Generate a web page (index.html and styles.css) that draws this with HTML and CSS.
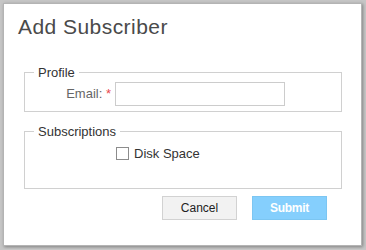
FILE: index.html
```html
<!DOCTYPE html>
<html lang="en">
	<head>
		<meta charset="UTF-8" />
		<meta name="viewport" content="width=device-width, initial-scale=1.0" />
		<title>Add Subscriber</title>
		<link rel="stylesheet" href="styles.css">
	</head>

	<body>
		<div class="dialog">
			<h1 class="title">Add Subscriber</h1>
			<form class="form" onsubmit="return false">
				<fieldset class="group profile">
					<legend>Profile</legend>
					<div class="row">
						<label class="label" for="email">Email: <span class="required">*</span></label>
						<input class="input" id="email" type="text" />
					</div>
				</fieldset>
				<fieldset class="group subscriptions">
					<legend>Subscriptions</legend>
					<div class="row">
						<span class="label"></span>
						<label class="check">
							<input type="checkbox" />
							<span>Disk Space</span>
						</label>
					</div>
				</fieldset>
				<div class="actions">
					<button type="button" class="btn cancel">Cancel</button>
					<button type="submit" class="btn submit">Submit</button>
				</div>
			</form>
		</div>
	</body>
</html>
```

FILE: styles.css
```css
body {
	margin: 0;
	padding: 3px;
	background: #c6c6c6;
	font-family: "Liberation Sans", Arial, sans-serif;
	font-size: 13px;
	color: #333;
}

.dialog {
	box-sizing: border-box;
	width: 359px;
	height: 243px;
	background: #fff;
	border: 1px solid #b4b4b4;
	box-shadow: 1px 1px 3px rgba(0, 0, 0, 0.35);
	padding-top: 11px;
}

.title {
	margin: 0 0 26px 14px;
	font-size: 21px;
	line-height: 24px;
	font-weight: normal;
	letter-spacing: 0.45px;
	color: #4a4a4a;
}

.group {
	margin: 0 19px 0 20px;
	padding: 2px 9px 6px;
	border: 1px solid #d0d0d0;
	min-width: 0;
}

.group legend {
	padding: 0 4px;
	font-size: 13px;
	line-height: 15px;
	color: #333;
}

.subscriptions {
	margin-top: 12px;
	padding-top: 3px;
	padding-bottom: 23px;
}

.row {
	display: flex;
	align-items: center;
	height: 23px;
}

.label {
	width: 77px;
	text-align: right;
	color: #666;
	margin-right: 4px;
	flex-shrink: 0;
}

.required {
	color: #e8474f;
}

.input {
	box-sizing: border-box;
	width: 170px;
	height: 24px;
	margin: 0;
	border: 1px solid #ccc;
	border-radius: 0;
	padding: 0 4px;
	font-family: inherit;
	font-size: 13px;
}

.check {
	display: flex;
	align-items: center;
	color: #333;
}

.check input {
	appearance: none;
	-webkit-appearance: none;
	box-sizing: border-box;
	width: 13px;
	height: 13px;
	margin: 0 5px 0 1px;
	border: 1px solid #8c8c8c;
	background: #fff;
}

.actions {
	display: flex;
	justify-content: flex-end;
	gap: 15px;
	margin: 7px 34px 0 0;
}

.btn {
	box-sizing: border-box;
	width: 75px;
	height: 24px;
	padding: 0;
	font-family: inherit;
	font-size: 12px;
	border: 1px solid #d2d2d2;
	border-radius: 0;
}

.cancel {
	background: #f2f2f2;
	color: #222;
}

.submit {
	background: #85cffd;
	border-color: #7cc6f2;
	color: #fff;
	font-weight: bold;
	letter-spacing: -0.3px;
}
```
